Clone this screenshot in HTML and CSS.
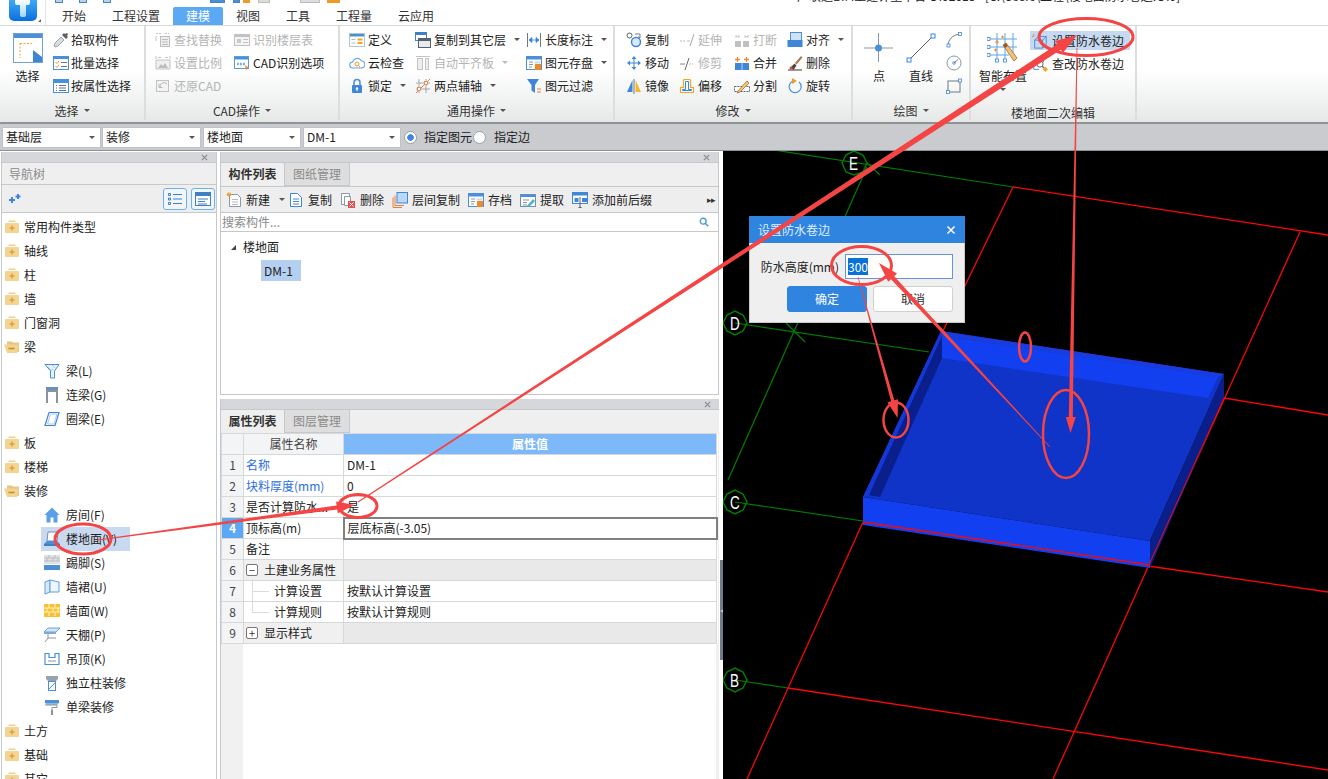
FILE: index.html
```html
<!DOCTYPE html>
<html lang="zh-CN">
<head>
<meta charset="utf-8">
<title>设置防水卷边</title>
<link rel="stylesheet" href="styles.css">
</head>
<body>
<svg class="sprite" xmlns="http://www.w3.org/2000/svg">
  <symbol id="i-select" viewBox="0 0 30 30"><rect x=".5" y=".5" width="29" height="29" fill="#fff" stroke="#6fa3dc"/><rect x="1" y="1" width="28" height="4" fill="#4f8fd6"/><path d="M7 10.500H19M7 10V25" stroke="#f5a623" stroke-dasharray="2 1.500" fill="none"/><path d="M20 17l9 7v5h-9z" fill="#3f86d2"/></symbol>
  <symbol id="i-pick" viewBox="0 0 16 16"><path d="M2 15l-1-1 1-3 6-6 3 3-6 6z" fill="#d8dde2" stroke="#8a939c" stroke-width=".8"/><path d="M9 3l2-2 1 1 2-1 1 1-1 2 1 1-2 2z" fill="#5b6168"/></symbol>
  <symbol id="i-batch" viewBox="0 0 16 16"><rect x=".5" y="1.500" width="15" height="13" fill="#fff" stroke="#4a90d9"/><rect x="1" y="2" width="14" height="2" fill="#4a90d9"/><path d="M2.500 7l1.500 1.500L6 6M2.500 11l1.500 1.500L6 10" stroke="#f09a26" fill="none"/><path d="M8 7.500h6M8 11.500h6" stroke="#6a7782"/></symbol>
  <symbol id="i-attr" viewBox="0 0 16 16"><rect x=".5" y="1.500" width="15" height="13" fill="#fff" stroke="#4a90d9"/><rect x="1" y="2" width="14" height="3" fill="#4a90d9"/><path d="M3 7.500h1M3 10h1M3 12.500h1M6 7.500h7M6 10h7M6 12.500h7" stroke="#55718c"/></symbol>
  <symbol id="i-find" viewBox="0 0 16 16"><path d="M1 1.500h6M10 1.500h4" stroke="#c4c4c4" stroke-dasharray="2 1"/><rect x="5.500" y="4.500" width="9" height="10" fill="#eee" stroke="#bdbdbd"/><path d="M7 7.500h6M7 10h6M7 12.500h6" stroke="#bdbdbd"/><path d="M1 4v5" stroke="#c4c4c4"/></symbol>
  <symbol id="i-floors" viewBox="0 0 16 16"><rect x=".5" y="2.500" width="15" height="11" fill="#f4f4f4" stroke="#c2c2c2"/><rect x="1" y="3" width="14" height="2" fill="#c2c2c2"/><rect x="3" y="7" width="4" height="4" fill="#c9c9c9"/><path d="M9 7.500h5M9 10.500h5" stroke="#c2c2c2"/></symbol>
  <symbol id="i-scale" viewBox="0 0 16 16"><path d="M1 14V5h14v9z" fill="#f0f0f0" stroke="#c4c4c4"/><path d="M3 13l3-4 2 2 2-3 3 5z" fill="#bdbdbd"/><path d="M1 1v3M15 1v3M3 2.500h3M10 2.500h3" stroke="#c4c4c4"/></symbol>
  <symbol id="i-restore" viewBox="0 0 16 16"><rect x="1.500" y="2.500" width="12" height="11" fill="#f4f4f4" stroke="#c2c2c2"/><path d="M12 6a4 4 0 0 0-7 3M4 6v3.500h3.500" fill="none" stroke="#b5b5b5"/></symbol>
  <symbol id="i-cadopt" viewBox="0 0 16 16"><rect x=".5" y="1.500" width="14" height="12" fill="#fff" stroke="#5b9bd8"/><rect x="1" y="2" width="13" height="2.500" fill="#4a90d9"/><path d="M3 9h8" stroke="#7fb0e2" stroke-width="2.500" stroke-dasharray="2 1"/><path d="M11 10l4 3-3 2z" fill="#ee7c3c"/></symbol>
  <symbol id="i-define" viewBox="0 0 16 16"><rect x=".5" y="1.500" width="15" height="13" fill="#fff" stroke="#b7c4d0"/><rect x="1" y="2" width="14" height="2.500" fill="#4a90d9"/><path d="M2.500 7.500h4M2.500 11h4" stroke="#b0bcc6"/><path d="M8.500 7.500h5M8.500 11h5" stroke="#f5a623" stroke-width="2"/></symbol>
  <symbol id="i-cloud" viewBox="0 0 16 16"><path d="M4 13a3 3 0 0 1-.4-6A4.800 4.800 0 0 1 12.500 6 3.500 3.500 0 0 1 12 13z" fill="#fff" stroke="#5da4e8" stroke-width="1.100"/><circle cx="8" cy="9" r="2" fill="none" stroke="#f09a26"/><path d="M9.500 10.500l1.500 1.500" stroke="#f09a26"/></symbol>
  <symbol id="i-lock" viewBox="0 0 16 16"><path d="M5 7V4.500a3 3 0 0 1 6 0V7" fill="none" stroke="#4a90d9" stroke-width="1.500"/><rect x="3" y="7" width="10" height="8" rx="1" fill="#3f86d8"/><circle cx="8" cy="10.500" r="1.200" fill="#fff"/><path d="M8 11v2" stroke="#fff"/></symbol>
  <symbol id="i-copyfloor" viewBox="0 0 16 16"><rect x=".5" y=".5" width="11" height="8" fill="#fff" stroke="#3f7fc4"/><rect x="1" y="1" width="10" height="2" fill="#3f7fc4"/><rect x="3.500" y="6.500" width="12" height="9" fill="#e8ecef" stroke="#55616c"/><rect x="4" y="7" width="11" height="2" fill="#55616c"/></symbol>
  <symbol id="i-autoalign" viewBox="0 0 16 16"><path d="M1 1.500h14" stroke="#c4c4c4"/><rect x="2.500" y="3.500" width="5" height="11" fill="#eee" stroke="#c4c4c4"/><rect x="10.500" y="3.500" width="3" height="11" fill="#eee" stroke="#c4c4c4"/></symbol>
  <symbol id="i-twopt" viewBox="0 0 16 16"><path d="M4 1v14M11 1v14M1 5h14M1 11h14" stroke="#8d98a3" stroke-width=".8"/><path d="M1 15L15 1" stroke="#ee7c3c"/><rect x="9.500" y="3.500" width="3" height="3" fill="#fff" stroke="#ee7c3c" stroke-width=".8"/><rect x="2.500" y="9.500" width="3" height="3" fill="#fff" stroke="#ee7c3c" stroke-width=".8"/></symbol>
  <symbol id="i-length" viewBox="0 0 16 16"><path d="M1.500 1v14M14.500 1v14" stroke="#6d7883"/><path d="M3 8h10M3 8l3-2.500v5zM13 8l-3-2.500v5z" stroke="#3f86d8" fill="#3f86d8" stroke-width=".8"/></symbol>
  <symbol id="i-save" viewBox="0 0 16 16"><rect x=".5" y="1.500" width="15" height="13" fill="#fff" stroke="#4a90d9"/><rect x="1" y="2" width="14" height="2.500" fill="#4a90d9"/><path d="M3 7h4M3 9.500h4M3 12h3" stroke="#8a97a3"/><rect x="9" y="9" width="6" height="6" fill="#ee8a2c"/><rect x="8.500" y="6.500" width="6" height="2" fill="#c9d9ea"/></symbol>
  <symbol id="i-filter" viewBox="0 0 16 16"><path d="M1 1h12L9 7v8L5.500 12.500V7z" fill="#3f86d8"/><path d="M11 11h4M11 14h4" stroke="#ee7c3c"/></symbol>
  <symbol id="i-copy2" viewBox="0 0 16 16"><circle cx="3.500" cy="3.500" r="2.500" fill="#fff" stroke="#55616c"/><circle cx="10" cy="10" r="4.500" fill="#d9ebfa" stroke="#3f86d8" stroke-width="1.500"/><path d="M9 2h5v4M12 4.500L14 6" stroke="#55616c" fill="none" stroke-width=".8"/></symbol>
  <symbol id="i-extend" viewBox="0 0 16 16"><path d="M1 9h6" stroke="#bbb" stroke-dasharray="2 1"/><path d="M8 9h3" stroke="#bbb"/><path d="M11 14L15 2" stroke="#aaa"/></symbol>
  <symbol id="i-move" viewBox="0 0 16 16"><path d="M8 1l2.500 3h-5zM8 15l-2.500-3h5zM1 8l3-2.500v5zM15 8l-3-2.500v5z" fill="#3f86d8"/><path d="M3 8h10M8 3v10" stroke="#3f86d8"/></symbol>
  <symbol id="i-trim" viewBox="0 0 16 16"><path d="M1 9h5" stroke="#888"/><path d="M10 9h4" stroke="#bbb" stroke-dasharray="2 1"/><path d="M6 15L10 3" stroke="#666"/></symbol>
  <symbol id="i-mirror" viewBox="0 0 16 16"><path d="M1 14L6.500 2v12z" fill="#3f86d8"/><path d="M8 1v15" stroke="#6d7883"/><path d="M9.500 2L15 14H9.500z" fill="#f8b62d"/></symbol>
  <symbol id="i-offset" viewBox="0 0 16 16"><path d="M1.500 14.500v-5h3v-7a1 1 0 0 1 1-1h5a1 1 0 0 1 1 1v7h3v5z" fill="none" stroke="#f5a623" stroke-width="1.200"/><path d="M3.500 12.500v-1h3v-8h3v8h3v1z" fill="none" stroke="#3f86d8"/></symbol>
  <symbol id="i-break" viewBox="0 0 16 16"><rect x="1" y="9" width="6" height="6" fill="#c0c0c0"/><rect x="9" y="9" width="6" height="6" fill="#c0c0c0"/><path d="M2 3v3M5 3v3M11 3v3M14 3v3M2 4.500h3M11 4.500h3" stroke="#c8c8c8"/></symbol>
  <symbol id="i-merge" viewBox="0 0 16 16"><rect x="1" y="8" width="14" height="7" fill="#3f86d8"/><path d="M8 8v7" stroke="#b8d4f0"/><path d="M1 4.500h5M3.500 2v5M10 4.500h5M12.500 2v5" stroke="#ee8a2c" stroke-width="1.300"/></symbol>
  <symbol id="i-split" viewBox="0 0 16 16"><path d="M.5 8.500h15v5H.5z" fill="#fff" stroke="#55616c" stroke-dasharray="2 1"/><path d="M4 13L13 3l2 2-9 9-3 1z" fill="#f5cd7a" stroke="#a0672a" stroke-width=".8"/></symbol>
  <symbol id="i-align" viewBox="0 0 16 16"><rect x="3.500" y=".5" width="11" height="8" fill="#cfe2f6" stroke="#4a90d9"/><rect x=".5" y="8" width="15" height="7" fill="#3f86d8"/></symbol>
  <symbol id="i-delete" viewBox="0 0 16 16"><path d="M8 8L14 1l1.500 1.500L9.500 9.500z" fill="#a9794a"/><path d="M3.500 12.500l4-4 2 2-3 4.500z" fill="#55403a"/><path d="M1 15h14" stroke="#333"/><circle cx="4" cy="13" r="1.500" fill="#d94f2b"/></symbol>
  <symbol id="i-rotate" viewBox="0 0 16 16"><path d="M5 3.500A6 6 0 1 0 12 4" fill="none" stroke="#4a90d9" stroke-width="1.200"/><path d="M5 0l5 3-5 3z" fill="#f09a26"/></symbol>
  <symbol id="i-point" viewBox="0 0 30 30"><path d="M0 15h29M14.500 0v29" stroke="#8a97a3"/><circle cx="14.500" cy="15" r="3.500" fill="#4a90d9"/></symbol>
  <symbol id="i-line" viewBox="0 0 30 30"><path d="M3 27L27 3" stroke="#55616c"/><rect x="1" y="25" width="4" height="4" fill="#fff" stroke="#3f86d8"/><rect x="25" y="1" width="4" height="4" fill="#fff" stroke="#3f86d8"/></symbol>
  <symbol id="i-arc" viewBox="0 0 16 16"><path d="M2 14C2 8 6 3 14 2" fill="none" stroke="#6d7883"/><rect x="1" y="12" width="3" height="3" fill="#fff" stroke="#3f86d8" stroke-width=".8"/><rect x="12.500" y=".5" width="3" height="3" fill="#fff" stroke="#3f86d8" stroke-width=".8"/></symbol>
  <symbol id="i-circle" viewBox="0 0 16 16"><circle cx="8" cy="8" r="7" fill="#fff" stroke="#8a97a3"/><circle cx="8" cy="8" r="1.300" fill="#fff" stroke="#3f86d8" stroke-width=".8"/><path d="M8 8l4-3.500" stroke="#55616c" stroke-width=".8"/></symbol>
  <symbol id="i-rect" viewBox="0 0 16 16"><rect x="2" y="3" width="12" height="11" fill="none" stroke="#6d7883"/><rect x="12.500" y="1" width="3" height="3" fill="#fff" stroke="#3f86d8" stroke-width=".8"/><rect x=".5" y="12.500" width="3" height="3" fill="#fff" stroke="#3f86d8" stroke-width=".8"/></symbol>
  <symbol id="i-smart" viewBox="0 0 32 30"><path d="M2 6h28M2 14h28M2 22h20M10 0v28M18 0v28M26 0v20" stroke="#5da4e8"/><g fill="#fff" stroke="#3f86d8" stroke-width=".8"><rect x="0" y="4.500" width="3" height="3"/><rect x="0" y="12.500" width="3" height="3"/><rect x="0" y="20.500" width="3" height="3"/><rect x="8.500" y="26" width="3" height="3"/><rect x="16.500" y="26" width="3" height="3"/></g><path d="M16 12l3-2 11 15-3 3z" fill="#f0c27a" stroke="#a8672a" stroke-width=".8"/><path d="M16 12l3-2 2 3-3 2z" fill="#9a5a2a"/><path d="M8 9h4M10 7v4M14 4h3M15.500 2.500v3M7 17h3M8.500 15.500v3" stroke="#ee8a2c"/></symbol>
  <symbol id="i-setwp" viewBox="0 0 18 18"><path d="M3 8l4-4h9v9l-4 4H3z" fill="none" stroke="#3f86d8"/><path d="M3 8h9v9M12 8l4-4" stroke="#3f86d8" fill="none"/><path d="M2 1v3H0" stroke="#ee8a2c" fill="none"/></symbol>
  <symbol id="i-checkwp" viewBox="0 0 18 18"><path d="M2 7l3-3h8v3M2 7v8h6" stroke="#3f86d8" fill="none"/><circle cx="9" cy="9" r="3.500" fill="#fff" stroke="#55616c"/><path d="M11.500 11.500l3 3" stroke="#55616c" stroke-width="1.300"/><path d="M15 12l3 3-3 3-3-3z" fill="#f5a623"/></symbol>
  <symbol id="i-folder" viewBox="0 0 16 14"><path d="M5 .5h6l1 1.500H4z" fill="#f0d28c"/><rect x="1" y="3" width="14" height="10" rx="1" fill="#f2d493"/><path d="M8 5.500v5M5.500 8h5" stroke="#dba23a" stroke-width="1.500"/></symbol>
  <symbol id="i-folder-open" viewBox="0 0 16 14"><path d="M3 3V1.500h5l1 1h6V12H3z" fill="#e6c684"/><path d="M0 4.500h13l2 1L13 13H3z" fill="#f2d490"/><path d="M4.500 8.500h6" stroke="#c28a2c" stroke-width="1.500"/></symbol>
  <symbol id="i-beam" viewBox="0 0 16 16"><path d="M1 1.500h14L10.500 8v7h-4V8z" fill="#e9f1fa" stroke="#4a90d9"/><path d="M4 4l4 4M8 2l3 3M7 8l2-2" stroke="#a9c4de"/></symbol>
  <symbol id="i-linkbeam" viewBox="0 0 16 16"><rect x="2" y="0" width="12" height="3" fill="#6b8fb8"/><rect x="2" y="3" width="12" height="2" fill="#8a949e"/><path d="M2 5h2v11H2zM12 5h2v11h-2z" fill="#8a949e"/></symbol>
  <symbol id="i-ring" viewBox="0 0 16 16"><path d="M5 1.500h10l-4 13H1z" fill="none" stroke="#3f86d8" stroke-width="1.200"/><path d="M6.500 3h6.500l-3 10H3.500z" fill="none" stroke="#8fbbe8" stroke-width=".8"/></symbol>
  <symbol id="i-room" viewBox="0 0 16 16"><path d="M8 .5L.5 8h2v7.500h4v-5h3v5h4V8h2z" fill="#5b9fe6"/></symbol>
  <symbol id="i-floor" viewBox="0 0 16 16"><path d="M4 1h10l-1 9H3z" fill="#fff" stroke="#6d8fb4"/><path d="M0 13l3-3h10l3 3z" fill="#4a90d9"/><rect x="0" y="13" width="16" height="2" fill="#3f7fc4"/></symbol>
  <symbol id="i-skirt" viewBox="0 0 16 16"><rect width="16" height="9" fill="#dfe2e5"/><path d="M0 3h16M0 6h16M5 0v3M11 0v3M3 3v3M9 3v3M14 3v3" stroke="#aeb4ba" stroke-width=".8"/><rect y="10" width="16" height="5" fill="#4a90d9"/></symbol>
  <symbol id="i-dado" viewBox="0 0 16 16"><path d="M1 3l5-2v12l-5 2z" fill="#dbe9f7" stroke="#5b9fe6"/><path d="M6 1l9 2v10l-9-0z" fill="#eef5fc" stroke="#5b9fe6"/></symbol>
  <symbol id="i-wall" viewBox="0 0 16 16"><rect width="16" height="13" y="1" fill="#fbc02d"/><path d="M0 5h16M0 9h16M5 1v4M11 1v4M3 5v4M9 5v4M14 5v4M5 9v4M11 9v4" stroke="#fff3cf"/></symbol>
  <symbol id="i-ceil" viewBox="0 0 16 16"><path d="M0 5l4-4h12l-4 4z" fill="#d4e5f7" stroke="#4a90d9" stroke-width=".8"/><path d="M0 5h12v2H0z" fill="#7fa8d4"/><path d="M4 7v4M1 15l3-4h8" stroke="#8a949e" fill="none"/></symbol>
  <symbol id="i-susp" viewBox="0 0 16 16"><path d="M1 2.500h4v4h6v-4h4v11H1z" fill="none" stroke="#4a90d9" stroke-width="1.200"/><path d="M4 10h8" stroke="#8a949e"/></symbol>
  <symbol id="i-colfin" viewBox="0 0 16 16"><path d="M2 1h12v3l-2 2H4L2 4z" fill="#9aa3ac"/><rect x="4.500" y="6.500" width="7" height="9" fill="#fff" stroke="#4a90d9"/><path d="M5 14l6-6" stroke="#4a90d9"/></symbol>
  <symbol id="i-beamfin" viewBox="0 0 16 16"><rect x="1" y="1" width="14" height="3" fill="#4a90d9"/><path d="M1 4h14l-2 2H3z" fill="#8fb8e0"/><path d="M1 6h12v2.500H8V11" stroke="#8a949e" fill="none"/><rect x="7" y="11" width="2" height="5" fill="#8a949e"/></symbol>
  <symbol id="i-navadd" viewBox="0 0 14 12"><path d="M4 4v6M1 7h6M10 1v5M7.500 3.500h5" stroke="#3f86d8" stroke-width="2"/></symbol>
  <symbol id="i-navlist" viewBox="0 0 16 14"><path d="M1.500 1.500h2v2h-2zM1.500 6h2v2h-2zM1.500 10.500h2v2h-2z" fill="none" stroke="#3f7fc4"/><path d="M6 2.500h9M6 7h9M6 11.500h9" stroke="#3f7fc4"/></symbol>
  <symbol id="i-navwin" viewBox="0 0 16 14"><rect x=".5" y=".5" width="15" height="13" fill="#fff" stroke="#3f7fc4"/><rect x="1" y="1" width="14" height="3" fill="#3f7fc4"/><path d="M3 7h10M3 9.500h7M3 12h9" stroke="#3f7fc4"/></symbol>
  <symbol id="i-new" viewBox="0 0 16 16"><path d="M3.500 2.500h8l3 3v9h-11z" fill="#fff" stroke="#8d98a3"/><path d="M6 7.500h6M6 10h6M6 12.500h6" stroke="#b5bcc3"/><path d="M3 0v5M.5 2.500h5M1 1l4 3M5 1L1 4" stroke="#f09a26" stroke-width=".9"/></symbol>
  <symbol id="i-doc" viewBox="0 0 16 16"><path d="M2.500 1.500h7l4 4v9h-11z" fill="#fff" stroke="#3f86d8"/><path d="M5 7h6M5 9.500h6M5 12h6" stroke="#3f86d8"/></symbol>
  <symbol id="i-del" viewBox="0 0 16 16"><path d="M1.500 1.500h8v11h-8z" fill="#fff" stroke="#8d98a3"/><path d="M4.500 4.500h6v9h-6z" fill="#fff" stroke="#8d98a3"/><rect x="8" y="9" width="7" height="7" fill="#e0524d"/><path d="M9.500 10.500l4 4M13.500 10.500l-4 4" stroke="#fff"/></symbol>
  <symbol id="i-layercopy" viewBox="0 0 16 16"><path d="M1 5.500v10h9" fill="none" stroke="#ee7c3c"/><path d="M3 3.500v10h9" fill="none" stroke="#ee7c3c"/><rect x="5" y=".5" width="10.500" height="10.500" fill="#b9d7f6" stroke="#3f86d8"/></symbol>
  <symbol id="i-extract" viewBox="0 0 16 16"><rect x=".5" y="2.500" width="15" height="12" fill="#fff" stroke="#6d8fb4"/><rect x="1" y="3" width="14" height="2" fill="#4a90d9"/><path d="M3 8h6M3 10.500h4M3 13h4" stroke="#8a97a3"/><path d="M7 14l6-7 2 2-6 6z" fill="#4fb0c8"/></symbol>
  <symbol id="i-prefix" viewBox="0 0 16 16"><rect x=".5" y=".5" width="15" height="11" fill="#fff" stroke="#3f86d8"/><rect x="1" y="1" width="14" height="2.500" fill="#3f86d8"/><rect x="2.500" y="6" width="4" height="4" fill="#3f86d8"/><rect x="10" y="6" width="5" height="4" fill="#3f86d8"/><path d="M8 5v11M6.500 15.500h3" stroke="#55616c"/></symbol>
  <symbol id="i-search" viewBox="0 0 12 12"><circle cx="5" cy="5" r="3.500" fill="none" stroke="#4a9ad4" stroke-width="1.600"/><path d="M7.500 7.500L11 11" stroke="#4a9ad4" stroke-width="1.800"/></symbol>
  <symbol id="i-close" viewBox="0 0 8 8"><path d="M1 1l6 6M7 1L1 7" stroke="#8a8f94" stroke-width="1.500"/></symbol>
</svg>

<div class="app">
  <header class="topbar">
    <div class="logo-cell">
      <svg class="logo" viewBox="0 0 28 21"><defs><linearGradient id="lg" x1="0" y1="0" x2="0" y2="1"><stop offset="0" stop-color="#3fa9f0"/><stop offset="1" stop-color="#0a6fe0"/></linearGradient><linearGradient id="lt" x1="0" y1="0" x2="0" y2="1"><stop offset="0" stop-color="#fff"/><stop offset="1" stop-color="#9fd6f8"/></linearGradient></defs><path d="M0 0h28v16a5 5 0 0 1-5 5H5a5 5 0 0 1-5-5z" fill="url(#lg)"/><path d="M6 0h15v3a2 2 0 0 1-2 2h-2v10a3 2 0 0 1-6 0V5H8a2 2 0 0 1-2-2z" fill="url(#lt)"/></svg>
      <span class="logo-mark"></span>
    </div>
    <div class="top-right">
      <div class="qa-strip">
        <span class="qa"></span><span class="qa"></span><span class="qa"></span>
        <span class="qa q-wide"></span><span class="qa q-blue"></span><span class="qa q-orange"></span>
        <span class="qa q-gray"></span><span class="qa q-gray2"></span><span class="qa q-orange q-last"></span>
        <span class="qa-title">广联达BIM土建计量平台 GTJ2018 - [C:\Users\工程\楼地面防水卷边.GTJ]</span>
      </div>
      <nav class="tabs">
        <span class="tab">开始</span><span class="tab">工程设置</span><span class="tab active">建模</span><span class="tab">视图</span><span class="tab">工具</span><span class="tab">工程量</span><span class="tab">云应用</span>
      </nav>
    </div>
  </header>

  <section class="ribbon">
    <div class="group g1">
      <div class="group-body">
        <div class="big b-select"><svg class="big-ic"><use href="#i-select"/></svg><span>选择</span></div>
        <div class="item"><svg class="ic"><use href="#i-pick"/></svg>拾取构件</div>
        <div class="item"><svg class="ic"><use href="#i-batch"/></svg>批量选择</div>
        <div class="item"><svg class="ic"><use href="#i-attr"/></svg>按属性选择</div>
      </div>
      <div class="group-label">选择<i class="caret"></i></div>
    </div>
    <div class="group g2">
      <div class="group-body">
        <div class="item off"><svg class="ic"><use href="#i-find"/></svg>查找替换</div>
        <div class="item off"><svg class="ic"><use href="#i-scale"/></svg>设置比例</div>
        <div class="item off"><svg class="ic"><use href="#i-restore"/></svg>还原CAD</div>
        <div class="item off"><svg class="ic"><use href="#i-floors"/></svg>识别楼层表</div>
        <div class="item"><svg class="ic"><use href="#i-cadopt"/></svg>CAD识别选项</div>
      </div>
      <div class="group-label">CAD操作<i class="caret"></i></div>
    </div>
    <div class="group g3">
      <div class="group-body">
        <div class="item"><svg class="ic"><use href="#i-define"/></svg>定义</div>
        <div class="item"><svg class="ic"><use href="#i-cloud"/></svg>云检查</div>
        <div class="item"><svg class="ic"><use href="#i-lock"/></svg>锁定<i class="caret"></i></div>
        <div class="item"><svg class="ic"><use href="#i-copyfloor"/></svg>复制到其它层<i class="caret"></i></div>
        <div class="item off"><svg class="ic"><use href="#i-autoalign"/></svg>自动平齐板<i class="caret pale"></i></div>
        <div class="item"><svg class="ic"><use href="#i-twopt"/></svg>两点辅轴<i class="caret"></i></div>
        <div class="item"><svg class="ic"><use href="#i-length"/></svg>长度标注<i class="caret"></i></div>
        <div class="item"><svg class="ic"><use href="#i-save"/></svg>图元存盘<i class="caret"></i></div>
        <div class="item"><svg class="ic"><use href="#i-filter"/></svg>图元过滤</div>
      </div>
      <div class="group-label">通用操作<i class="caret"></i></div>
    </div>
    <div class="group g4">
      <div class="group-body">
        <div class="item"><svg class="ic"><use href="#i-copy2"/></svg>复制</div>
        <div class="item"><svg class="ic"><use href="#i-move"/></svg>移动</div>
        <div class="item"><svg class="ic"><use href="#i-mirror"/></svg>镜像</div>
        <div class="item off"><svg class="ic"><use href="#i-extend"/></svg>延伸</div>
        <div class="item off"><svg class="ic"><use href="#i-trim"/></svg>修剪</div>
        <div class="item"><svg class="ic"><use href="#i-offset"/></svg>偏移</div>
        <div class="item off"><svg class="ic"><use href="#i-break"/></svg>打断</div>
        <div class="item"><svg class="ic"><use href="#i-merge"/></svg>合并</div>
        <div class="item"><svg class="ic"><use href="#i-split"/></svg>分割</div>
        <div class="item"><svg class="ic"><use href="#i-align"/></svg>对齐<i class="caret"></i></div>
        <div class="item"><svg class="ic"><use href="#i-delete"/></svg>删除</div>
        <div class="item"><svg class="ic"><use href="#i-rotate"/></svg>旋转</div>
      </div>
      <div class="group-label">修改<i class="caret"></i></div>
    </div>
    <div class="group g5">
      <div class="group-body">
        <div class="big b-point"><svg class="big-ic"><use href="#i-point"/></svg><span>点</span></div>
        <div class="big b-line"><svg class="big-ic"><use href="#i-line"/></svg><span>直线</span></div>
        <div class="item"><svg class="ic"><use href="#i-arc"/></svg></div>
        <div class="item"><svg class="ic"><use href="#i-circle"/></svg></div>
        <div class="item"><svg class="ic"><use href="#i-rect"/></svg></div>
      </div>
      <div class="group-label">绘图<i class="caret"></i></div>
    </div>
    <div class="group g6">
      <div class="group-body">
        <div class="big b-smart"><svg class="big-ic smart-ic"><use href="#i-smart"/></svg><span>智能布置</span><i class="caret solo"></i></div>
        <div class="item wp hot"><svg class="ic"><use href="#i-setwp"/></svg>设置防水卷边</div>
        <div class="item wp"><svg class="ic"><use href="#i-checkwp"/></svg>查改防水卷边</div>
      </div>
      <div class="group-label plain">楼地面二次编辑</div>
    </div>
  </section>

  <div class="selbar">
    <div class="combo">基础层<i class="caret"></i></div>
    <div class="combo">装修<i class="caret"></i></div>
    <div class="combo">楼地面<i class="caret"></i></div>
    <div class="combo">DM-1<i class="caret"></i></div>
    <span class="radio on"></span><span class="radio-text">指定图元</span>
    <span class="radio"></span><span class="radio-text second">指定边</span>
  </div>

  <main class="workspace">
    <aside class="panel nav">
      <div class="panel-head"><svg class="x"><use href="#i-close"/></svg></div>
      <div class="nav-title">导航树</div>
      <div class="nav-tools">
        <svg class="nav-add"><use href="#i-navadd"/></svg>
        <span class="nav-btn"><svg><use href="#i-navlist"/></svg></span>
        <span class="nav-btn"><svg><use href="#i-navwin"/></svg></span>
      </div>
      <ul class="tree">
        <li class="row"><svg class="fold"><use href="#i-folder"/></svg>常用构件类型</li>
        <li class="row"><svg class="fold"><use href="#i-folder"/></svg>轴线</li>
        <li class="row"><svg class="fold"><use href="#i-folder"/></svg>柱</li>
        <li class="row"><svg class="fold"><use href="#i-folder"/></svg>墙</li>
        <li class="row"><svg class="fold"><use href="#i-folder"/></svg>门窗洞</li>
        <li class="row"><svg class="fold"><use href="#i-folder-open"/></svg>梁</li>
        <li class="row child"><svg class="ic"><use href="#i-beam"/></svg>梁(L)</li>
        <li class="row child"><svg class="ic"><use href="#i-linkbeam"/></svg>连梁(G)</li>
        <li class="row child"><svg class="ic"><use href="#i-ring"/></svg>圈梁(E)</li>
        <li class="row"><svg class="fold"><use href="#i-folder"/></svg>板</li>
        <li class="row"><svg class="fold"><use href="#i-folder"/></svg>楼梯</li>
        <li class="row"><svg class="fold"><use href="#i-folder-open"/></svg>装修</li>
        <li class="row child"><svg class="ic"><use href="#i-room"/></svg>房间(F)</li>
        <li class="row child current"><svg class="ic"><use href="#i-floor"/></svg>楼地面(V)</li>
        <li class="row child"><svg class="ic"><use href="#i-skirt"/></svg>踢脚(S)</li>
        <li class="row child"><svg class="ic"><use href="#i-dado"/></svg>墙裙(U)</li>
        <li class="row child"><svg class="ic"><use href="#i-wall"/></svg>墙面(W)</li>
        <li class="row child"><svg class="ic"><use href="#i-ceil"/></svg>天棚(P)</li>
        <li class="row child"><svg class="ic"><use href="#i-susp"/></svg>吊顶(K)</li>
        <li class="row child"><svg class="ic"><use href="#i-colfin"/></svg>独立柱装修</li>
        <li class="row child"><svg class="ic"><use href="#i-beamfin"/></svg>单梁装修</li>
        <li class="row"><svg class="fold"><use href="#i-folder"/></svg>土方</li>
        <li class="row"><svg class="fold"><use href="#i-folder"/></svg>基础</li>
        <li class="row"><svg class="fold"><use href="#i-folder"/></svg>其它</li>
      </ul>
    </aside>

    <div class="middle">
      <section class="panel list-panel">
        <div class="panel-head"><svg class="x"><use href="#i-close"/></svg></div>
        <div class="ptabs"><span class="ptab active">构件列表</span><span class="ptab">图纸管理</span></div>
        <div class="list-tools">
          <span class="tool t-new"><svg class="ic"><use href="#i-new"/></svg>新建<i class="caret"></i></span>
          <span class="tool t-copy"><svg class="ic"><use href="#i-doc"/></svg>复制</span>
          <span class="tool t-del"><svg class="ic"><use href="#i-del"/></svg>删除</span>
          <span class="tool t-layer"><svg class="ic"><use href="#i-layercopy"/></svg>层间复制</span>
          <span class="tool t-save"><svg class="ic"><use href="#i-save"/></svg>存档</span>
          <span class="tool t-ext"><svg class="ic"><use href="#i-extract"/></svg>提取</span>
          <span class="tool t-pre"><svg class="ic"><use href="#i-prefix"/></svg>添加前后缀</span>
          <span class="more">▸▸</span>
        </div>
        <div class="search"><span>搜索构件...</span><svg class="search-ic"><use href="#i-search"/></svg></div>
        <div class="comp-tree">
          <div class="comp-root"><i class="tri"></i>楼地面</div>
          <div class="comp-leaf">DM-1</div>
        </div>
      </section>

      <section class="panel prop-panel">
        <div class="panel-head"><svg class="x"><use href="#i-close"/></svg></div>
        <div class="ptabs"><span class="ptab active">属性列表</span><span class="ptab">图层管理</span></div>
        <table class="props">
          <colgroup><col class="c-n"><col class="c-k"><col class="c-v"></colgroup>
          <tr class="hd"><th></th><th>属性名称</th><th class="hv">属性值</th></tr>
          <tr><td class="n">1</td><td class="k link">名称</td><td>DM-1</td></tr>
          <tr><td class="n">2</td><td class="k link">块料厚度(mm)</td><td>0</td></tr>
          <tr><td class="n">3</td><td class="k">是否计算防水...</td><td>是</td></tr>
          <tr><td class="n sel">4</td><td class="k">顶标高(m)</td><td class="edit">层底标高(-3.05)</td></tr>
          <tr><td class="n">5</td><td class="k">备注</td><td></td></tr>
          <tr class="sec"><td class="n">6</td><td class="k"><span class="kv"><i class="pm">−</i>土建业务属性</span></td><td></td></tr>
          <tr><td class="n">7</td><td class="k sub"><span class="kv"><i class="guide"></i>计算设置</span></td><td>按默认计算设置</td></tr>
          <tr><td class="n">8</td><td class="k sub"><span class="kv"><i class="guide end"></i>计算规则</span></td><td>按默认计算规则</td></tr>
          <tr class="sec"><td class="n">9</td><td class="k"><span class="kv"><i class="pm">+</i>显示样式</span></td><td></td></tr>
        </table>
        <div class="table-rest"><span class="gutter"></span><span class="blank"></span></div>
      </section>
    </div>

    <div class="splitter"><span class="grip">◂</span></div>

    <div class="canvas">
      <svg class="drawing" viewBox="723 151 605 628" xmlns="http://www.w3.org/2000/svg">
        <g fill="none" stroke="#007e00" stroke-width="1.200">
          <path d="M774 150L1013 187"/>
          <path d="M867 167L728 480"/>
          <path d="M735 323L929 352"/>
          <path d="M735 502L863 521"/>
          <path d="M735 680L788 688"/>
          <path d="M867 163L880 175M786 323L805 342"/>
          <polygon points="846,155 854,151 863,155 867,163 863,172 854,175 846,172 842,163" stroke-width="1.500"/>
          <polygon points="727,315 735,311 743,315 747,323 743,331 735,335 727,331 723,323" stroke-width="1.500"/>
          <polygon points="727,494 735,490 743,494 747,502 743,510 735,514 727,510 723,502" stroke-width="1.500"/>
          <polygon points="727,672 735,668 743,672 747,680 743,688 735,692 727,688 723,680" stroke-width="1.500"/>
        </g>
        <g fill="none" stroke="#f80808" stroke-width="1.300">
          <path d="M1013 187L1328 235"/>
          <path d="M1013 187L941 335"/>
          <path d="M1300 232L1148 567L1053 779"/>
          <path d="M1224 398L1328 415"/>
          <path d="M863 522L747 779"/>
          <path d="M788 688L1328 770"/>
          <path d="M1148 566L1328 592"/>
        </g>
        <polygon points="941,331 1224,374 1150,541 863,497" fill="#1033c8"/>
        <polygon points="941,331 1224,374 1218,377 942,336" fill="#1a3cdc"/>
        <polygon points="942,336 1218,377 1208,398 942,358" fill="#1240f0"/>
        <polygon points="941,331 942,336 869,495 863,497" fill="#1437d8"/>
        <polygon points="942,336 942,358 880,497 869,495" fill="#0a1f8c"/>
        <polygon points="1224,374 1224,398 1150,568 1150,541" fill="#0a1f8c"/>
        <polygon points="863,497 1150,541 1150,568 863,525" fill="#1240f0"/>
        <path d="M863 522L1150 565" stroke="#f80808" stroke-width="1.300"/>
        <path d="M1224 398L1148 567" stroke="#f80808" stroke-width="1"/>
        <g class="axis" fill="#fff">
          <text transform="translate(849 170) scale(.75 1)">E</text>
          <text transform="translate(730 330) scale(.75 1)">D</text>
          <text transform="translate(730 509) scale(.75 1)">C</text>
          <text transform="translate(730 687) scale(.75 1)">B</text>
        </g>
      </svg>

      <div class="dialog">
        <div class="dlg-title"><span>设置防水卷边</span><svg class="dlg-x" viewBox="0 0 10 10"><path d="M1.500 1.500l7 7M8.500 1.500l-7 7" stroke="#fff" stroke-width="1.500"/></svg></div>
        <div class="dlg-body">
          <div class="dlg-field"><label>防水高度(mm)</label><div class="dlg-input"><span class="selected">300</span></div></div>
          <div class="dlg-btns"><button class="btn primary">确定</button><button class="btn">取消</button></div>
        </div>
      </div>
    </div>
  </main>

  <svg class="marks" viewBox="0 0 1328 779" xmlns="http://www.w3.org/2000/svg">
    <g fill="#f44444">
      <polygon points="357.700,501.600 1057.200,44.200 1055.200,41.100 1077,35 1062.800,52.900 1060.800,49.800 358.300,502.400"/>
      <polygon points="98,539.500 336.600,505.400 336.100,501.500 354.700,505 337.700,513.300 337.200,509.400 98,540.500"/>
      <polygon points="1076.600,48 1068.800,417 1065.800,417 1070.500,433 1075.800,417 1072.800,417 1077.400,48"/>
      <polygon points="1050.200,446.800 894.200,276.200 897,273.600 879,263 888.200,281.800 891,279.200 1049.800,447.200"/>
      <polygon points="858.300,277 894.300,400.200 898,399.200 897.600,418 887.400,402.200 891.100,401.200 857.700,277"/>
    </g>
    <g fill="none" stroke="#f44444" stroke-width="3">
      <ellipse cx="1086" cy="37" rx="47" ry="18.500"/>
      <ellipse cx="83" cy="539" rx="28" ry="15"/>
      <ellipse cx="358" cy="506" rx="19" ry="11.500"/>
      <ellipse cx="861.500" cy="265.500" rx="30" ry="19"/>
      <ellipse cx="1025" cy="347" rx="6" ry="14.500" stroke-width="2.500"/>
      <ellipse cx="896" cy="420" rx="12.500" ry="17.500" stroke-width="2.500"/>
      <ellipse cx="1066" cy="434" rx="23" ry="44" stroke-width="2.500"/>
    </g>
  </svg>
</div>
</body>
</html>
```

FILE: styles.css
```css
* { box-sizing: border-box; }
html, body { margin: 0; padding: 0; background: #fff; }
body { font: 12px/16px "Noto Sans CJK SC", "Noto Sans", sans-serif; color: #222; }
ul { list-style: none; margin: 0; padding: 0; }
i { font-style: normal; }
.sprite { position: absolute; width: 0; height: 0; }

.app { position: relative; width: 1328px; height: 779px; overflow: hidden; display: flex; flex-direction: column; background: #fff; }
.marks { position: absolute; left: 0; top: 0; width: 1328px; height: 779px; pointer-events: none; }

/* Title strip */
.topbar { display: flex; height: 26px; flex: none; border-bottom: 1px solid #d8d8d8; background: #fff; }
.logo-cell { display: flex; width: 46px; height: 25px; padding-left: 9px; border-right: 1px solid #e4e4e4; background: #fff; }
.logo { width: 28px; height: 21px; flex: none; }
.logo-mark { width: 0; height: 0; margin: 19px 0 0 1px; border-left: 3px solid transparent; border-bottom: 3px solid #666; }
.top-right { flex: 1; display: flex; flex-direction: column; padding-left: 3px; }
.qa-strip { display: flex; height: 7px; overflow: hidden; align-items: flex-start; padding-left: 6px; }
.qa { display: block; width: 8px; height: 3px; margin-right: 16px; background: #b9d2ec; border: 1px solid #4a82c0; border-top: 0; }
.q-wide { width: 15px; margin-left: 83px; margin-right: 8px; background: #4a90d9; }
.q-blue { width: 7px; margin-right: 3px; background: #4a90d9; }
.q-orange { width: 7px; margin-right: 8px; background: #f09a26; border-color: #f09a26; }
.q-gray { width: 12px; margin-right: 30px; background: #ddd; border-color: #bbb; }
.q-gray2 { width: 20px; margin-right: 7px; background: #ddd; border-color: #bbb; }
.q-last { margin-right: 0; width: 13px; }
.qa-title { margin: -12px 0 0 457px; line-height: 16px; white-space: nowrap; color: #222; }
.tabs { display: flex; height: 18px; }
.tab { padding: 0 13px; line-height: 18px; color: #333; }
.tab.active { background: #5ba9f5; color: #fff; border-radius: 2px 2px 0 0; }

/* Ribbon */
.ribbon { display: flex; height: 98px; flex: none; background: linear-gradient(#fff 45%, #e6e8e8 100%); border-bottom: 2px solid #8f9396; }
.group { display: flex; flex-direction: column; height: 94px; border-right: 2px solid #dcdede; }
.group-body { display: grid; grid-auto-flow: column; grid-template-rows: repeat(3, 23px); padding-top: 2px; height: 71px; }
.group-label { height: 22px; margin-top: 1px; display: flex; align-items: center; justify-content: center; color: #333; padding-top: 3px; }
.group-label.plain { padding-top: 7px; }
.g1 { width: 146px; }
.g1 .group-body { padding-left: 10px; grid-template-columns: 43px auto; }
.g1 .item { gap: 2px; }
.g2 { width: 194px; }
.g2 .group-body { padding-left: 9px; grid-template-columns: 79px auto; }
.g3 { width: 275px; }
.g3 .group-body { padding-left: 9px; grid-template-columns: 66px 111px auto; }
.g4 { width: 238px; }
.g4 .group-body { padding-left: 11px; grid-template-columns: 53px 55px 53px auto; }
.g5 { width: 118px; }
.g5 .group-body { padding-left: 11px; grid-template-columns: 42px 40px auto; }
.g6 { width: 166px; }
.g6 .group-body { padding-left: 8px; grid-template-columns: 51px auto; }

.item { display: flex; align-items: center; gap: 3px; white-space: nowrap; color: #222; }
.item.off { color: #b4b4b4; }
.ic { width: 16px; height: 16px; flex: none; }
.wp { margin-top: 3px; height: 19px; padding-left: 2px; width: 100px; gap: 4px; }
.hot { background: #c6d9f1; }

.big { grid-row: 1 / 4; display: flex; flex-direction: column; align-items: center; }
.big-ic { width: 30px; height: 30px; margin-top: 5px; flex: none; }
.big span { margin-top: 6px; line-height: 14px; white-space: nowrap; color: #222; }
.b-select { width: 35px; }
.b-point { width: 30px; }
.b-line { width: 30px; }
.b-smart { width: 48px; }
.smart-ic { width: 32px; }

.caret { display: inline-block; width: 0; height: 0; margin-left: 5px; border-left: 3px solid transparent; border-right: 3px solid transparent; border-top: 3px solid #555; flex: none; }
.caret.pale { border-top-color: #bbb; }
.caret.solo { margin: 5px 0 0; }

/* Selection bar */
.selbar { display: flex; align-items: center; height: 26px; flex: none; padding-left: 2px; background: #c9cbcf; }
.combo { display: flex; align-items: center; justify-content: space-between; width: 99px; height: 21px; margin-right: 1px; padding: 0 5px 0 3px; background: #fff; border: 1px solid #bfc2c6; }
.combo:nth-child(3), .combo:nth-child(4) { margin-left: 1px; width: 98px; }
.radio { width: 13px; height: 13px; margin-left: 2px; border-radius: 50%; background: #fff; border: 1px solid #9aa0a6; flex: none; }
.radio.on { background: radial-gradient(circle, #3f86e8 0 3px, #fff 3.500px); }
.radio-text { margin-left: 7px; white-space: nowrap; width: 49px; }
.radio-text.second { margin-left: 8px; }
.radio-text + .radio { margin-left: 0; }

/* Workspace */
.workspace { display: flex; flex: 1; min-height: 0; border-top: 1px solid #8a9097; }
.panel { display: flex; flex-direction: column; background: #fff; }
.panel-head { display: flex; justify-content: flex-end; align-items: center; height: 11px; flex: none; padding-right: 8px; background: #d5d7db; border-bottom: 1px solid #c5c8cc; }
.x { width: 7px; height: 7px; }

.nav { width: 216px; margin: 1px 0 0 1px; border-right: 1px solid #c5c8cc; border-left: 1px solid #c5c8cc; }
.nav-title { height: 22px; line-height: 22px; padding-left: 7px; color: #8b8b8b; background: #efefef; border-bottom: 1px solid #c5c8cc; flex: none; }
.nav-tools { display: flex; align-items: center; height: 28px; padding: 0 1px 0 6px; gap: 4px; background: #eeeeef; border-bottom: 1px solid #c5c8cc; flex: none; }
.nav-add { width: 14px; height: 12px; margin-right: auto; }
.nav-btn { display: flex; align-items: center; justify-content: center; width: 24px; height: 22px; border: 1px solid #6db0f0; border-radius: 3px; background: #f0f6fc; }
.nav-btn svg { width: 16px; height: 14px; }
.tree { padding-top: 2px; flex: 1; overflow: hidden; }
.row { display: flex; align-items: center; height: 24px; padding-left: 2px; gap: 4px; white-space: nowrap; }
.fold { width: 16px; height: 14px; flex: none; }
.child { padding-left: 42px; gap: 6px; }
.current { background: #c9d9f0; margin-left: 39px; width: 89px; padding-left: 3px; }

.middle { display: flex; flex-direction: column; width: 499px; margin: 1px 0 0 3px; }
.list-panel { height: 243px; flex: none; border: 1px solid #c5c8cc; border-top: 0; }
.prop-panel { flex: 1; margin-top: 4px; border-left: 1px solid #c5c8cc; background: #f0f0f0; min-height: 0; }
.ptabs { display: flex; height: 23px; flex: none; background: #efefef; }
.ptab { width: 65px; line-height: 22px; text-align: center; color: #8b8b8b; background: #dedede; border-right: 1px solid #c5c8cc; border-bottom: 1px solid #c5c8cc; }
.ptab.active { width: 64px; color: #333; font-weight: 700; background: #efefef; border-bottom: 0; }
.list-tools { display: flex; align-items: center; height: 27px; flex: none; padding-left: 5px; background: #eeeeef; border-top: 1px solid #c5c8cc; border-bottom: 1px solid #c5c8cc; }
.tool { display: flex; align-items: center; gap: 4px; white-space: nowrap; }
.t-new { width: 62px; }
.t-copy { width: 52px; }
.t-del { width: 52px; }
.t-layer { width: 76px; }
.t-save { width: 52px; }
.t-ext { width: 52px; }
.more { margin-left: auto; margin-right: 3px; font-size: 9px; letter-spacing: -1px; color: #333; }
.search { display: flex; align-items: center; justify-content: space-between; height: 19px; flex: none; padding: 0 9px 0 1px; color: #8a8a8a; border-bottom: 1px solid #c5c8cc; }
.search-ic { width: 10px; height: 10px; }
.comp-tree { flex: 1; padding-top: 4px; }
.comp-root { display: flex; align-items: center; height: 22px; padding-left: 10px; }
.tri { width: 0; height: 0; margin-right: 7px; border-left: 5px solid transparent; border-bottom: 5px solid #444; }
.comp-leaf { display: block; width: 40px; height: 21px; margin: 2px 0 0 40px; padding-left: 3px; line-height: 21px; background: #b4cff0; }

.props { flex: none; width: 495px; table-layout: fixed; border-collapse: collapse; background: #fff; }
.c-n { width: 22px; }
.c-k { width: 100px; }
.c-v { width: 373px; }
.props tr { height: 21px; }
.props td, .props th { height: 21px; padding: 0 3px; border: 1px solid #d6d8da; white-space: nowrap; overflow: hidden; font-weight: 400; text-align: left; }
.props .k { padding-left: 2px; }
.props th { text-align: center; background: #f3f4f5; color: #444; }
.props .hv { background: #7db8f8; color: #fff; font-weight: 700; }
.props .n { padding: 0; text-align: center; background: #f3f4f5; color: #444; }
.props .sel { background: #5ba9f5; color: #fff; font-weight: 700; }
.props .link { color: #2a6ee0; }
.props .edit { border: 2px solid #808080; }
.sec td { background: #e9e9e9; }
.props .sec .k { background: #f0f0f0; }
.kv { display: flex; align-items: center; height: 19px; }
.pm { display: flex; align-items: center; justify-content: center; width: 12px; height: 12px; margin-right: 6px; border: 1px solid #777; border-radius: 2px; font-size: 11px; line-height: 10px; background: #fff; color: #333; }
.sub .kv { padding-left: 6px; }
.guide { display: block; width: 22px; height: 21px; border-left: 1px solid #dcdcdc; }
.guide::after { content: ""; display: block; width: 16px; margin-top: 10px; border-top: 1px solid #dcdcdc; }
.guide.end { height: 11px; margin-top: -10px; }
.table-rest { flex: 1; display: flex; }
.gutter { width: 22px; background: #f1f1f1; }
.blank { flex: 1; background: #fff; margin-right: 3px; }

.splitter { width: 4px; flex: none; background: #fff; }
.grip { display: flex; align-items: center; justify-content: center; width: 3px; height: 100px; margin: 409px 0 0 1px; background: #6f7b86; color: #c5c9cd; font-size: 8px; overflow: hidden; }

.canvas { position: relative; flex: 1; background: #000; overflow: hidden; }
.drawing { display: block; width: 605px; height: 628px; }
.axis text { font: 18px "Liberation Sans", sans-serif; }

.dialog { position: absolute; left: 26px; top: 65px; width: 216px; height: 107px; background: #efefef; border: 1px solid #c8c8c8; border-top: 0; }
.dlg-title { display: flex; align-items: center; justify-content: space-between; height: 27px; margin: 0 -1px; padding: 0 9px 0 9px; background: #2f84e0; color: #dfeeff; }
.dlg-x { width: 10px; height: 10px; }
.dlg-body { padding: 11px 11px 0 0; }
.dlg-field { display: flex; align-items: center; justify-content: flex-end; height: 25px; }
.dlg-field label { margin-right: 6px; white-space: nowrap; }
.dlg-input { display: flex; align-items: center; width: 108px; height: 25px; padding-left: 2px; background: #fff; border: 1px solid #6a93dc; }
.selected { background: #0a72d4; color: #fff; line-height: 17px; }
.dlg-btns { display: flex; justify-content: flex-end; gap: 6px; margin-top: 7px; }
.btn { width: 80px; height: 26px; padding: 0; font: inherit; color: #333; background: #fff; border: 1px solid #d0d0d0; border-radius: 3px; }
.btn.primary { background: #2f84e0; border-color: #2f84e0; color: #fff; }
```
